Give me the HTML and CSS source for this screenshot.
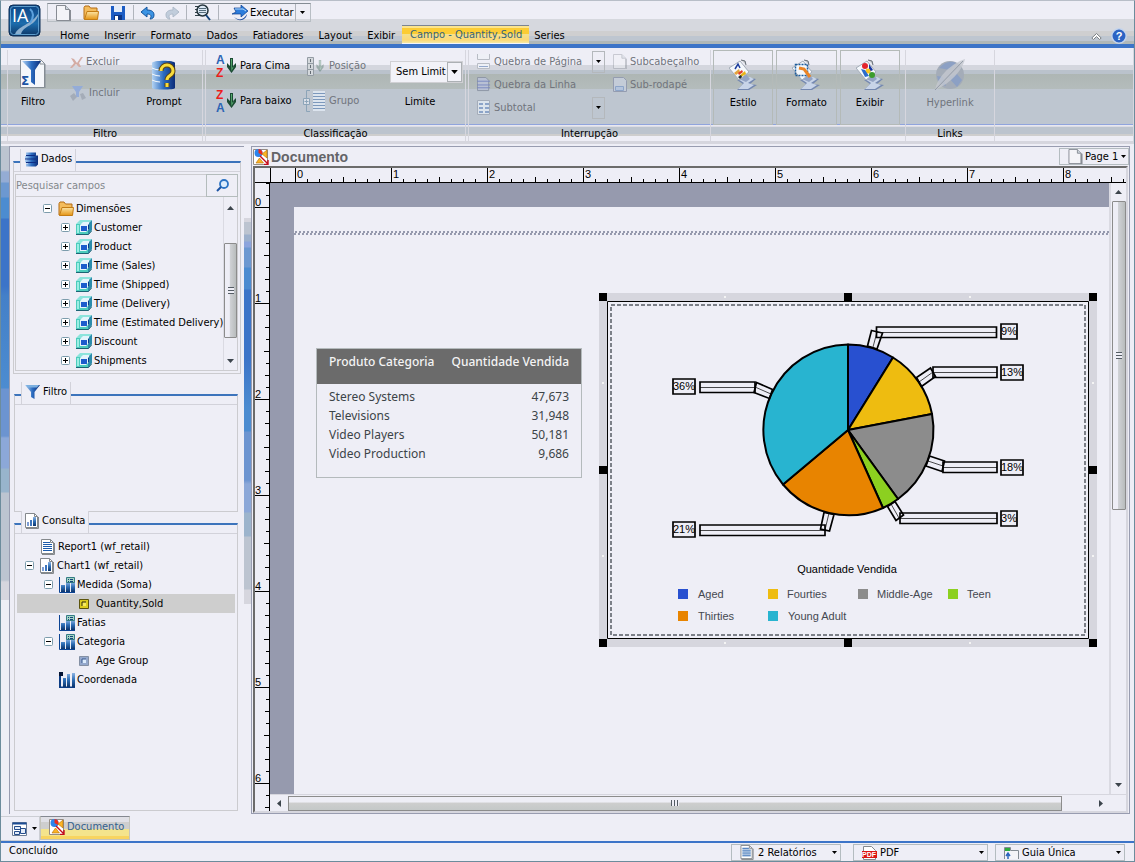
FILE: index.html
```html
<!DOCTYPE html>
<html lang="pt">
<head>
    <meta charset="UTF-8">
    <meta name="viewport" content="width=device-width, initial-scale=1.0">
    <title>InfoAssist - Documento</title>
    <link rel="stylesheet" href="styles.css">
</head>
<body>
    <!-- shared icons -->
    <svg class="defs" width="0" height="0" aria-hidden="true">
        <defs>
            <linearGradient id="g-blue" x1="0" x2="1"><stop offset="0" stop-color="#b4d4f4"/><stop offset=".5" stop-color="#2c6cc0"/><stop offset="1" stop-color="#0c2c78"/></linearGradient>
            <linearGradient id="g-bar" x1="0" x2="0" y1="0" y2="1"><stop offset="0" stop-color="#8cb4e4"/><stop offset=".5" stop-color="#2c6cb4"/><stop offset="1" stop-color="#0c346c"/></linearGradient>
            <linearGradient id="g-logo" x1="0" x2="0" y1="0" y2="1"><stop offset="0" stop-color="#0c4484"/><stop offset=".6" stop-color="#1c6cac"/><stop offset="1" stop-color="#0c3464"/></linearGradient>
            <linearGradient id="g-folder" x1="0" x2="0" y1="0" y2="1"><stop offset="0" stop-color="#fce4a4"/><stop offset="1" stop-color="#e49414"/></linearGradient>
        </defs>
        <symbol id="i-plus" viewBox="0 0 9 9"><rect x=".5" y=".5" width="8" height="8" rx="1" fill="#fff" stroke="#7c9cac"/><path d="M2 4.500h5M4.500 2v5" stroke="#000"/></symbol>
        <symbol id="i-minus" viewBox="0 0 9 9"><rect x=".5" y=".5" width="8" height="8" rx="1" fill="#fff" stroke="#7c9cac"/><path d="M2 4.500h5" stroke="#000"/></symbol>
        <symbol id="i-caret" viewBox="0 0 5 3"><path d="M0 0h5L2.500 3z" fill="currentColor"/></symbol>
        <symbol id="i-folder" viewBox="0 0 16 16"><path d="M1 14V2.500L2 1h4l1.500 2H14v11z" fill="#f4bc5c" stroke="#b46c14"/><path d="M1.500 14.500 4 6.500h11.500l-1 8z" fill="url(#g-folder)" stroke="#c47c14"/></symbol>
        <symbol id="i-cube" viewBox="0 0 16 16"><path d="M0 4 4 0h12l-4 4z" fill="#8ce4dc"/><path d="M12 4 16 0v10l-4 5z" fill="#2c8cac"/><path d="M0 4h12v11H0z" fill="#4cccbc"/><path d="M1 5h2v8H1z" fill="#9ceee4"/><path d="M4 5 7 2h6v7l-3 3H4z" fill="#e4f4fc"/><path d="M5 6h6v5H5z" fill="#1c5ccc"/><path d="M12 5l1-1v5l-1 1z" fill="#0c3c8c"/><path d="M0 14.500h12.500L16 10.500" fill="none" stroke="#1c6474"/></symbol>
        <symbol id="i-db" viewBox="0 0 15 16"><path d="M2 1.500h10v3h2v9l-2 2H2v-3h2v-1H1v-3h2V8H1V5h2V4H2z" fill="url(#g-blue)"/><path d="M2 4.500h9M1 8h11M2 11.500h10" stroke="#0c2c84"/></symbol>
        <symbol id="i-funnel" viewBox="0 0 16 16"><path d="M0 1h15L9.500 8v7L6 13V8z" fill="url(#g-blue)"/><path d="M1 1h13l-2 2.500H3z" fill="#7cb0e0"/></symbol>
        <symbol id="i-chart" viewBox="0 0 15 16"><path d="M.5.500h9l3 3v11H.5z" fill="#fff" stroke="#84888c"/><path d="M9.500.500v3h3M13.500 4v11.500H1" fill="none" stroke="#84888c"/><path d="M2 9h2v4H2z" fill="#7c9cd4"/><path d="M5 7h2v6H5z" fill="#3c74bc"/><path d="M8 4h3v9H8z" fill="url(#g-bar)"/></symbol>
        <symbol id="i-report" viewBox="0 0 15 16"><path d="M.5.500h9l3 3v11H.5z" fill="#fff" stroke="#84888c"/><path d="M9.500.500v3h3M13.500 4v11.500H1" fill="none" stroke="#84888c"/><path d="M2 3.500h7M2 5.500h9M2 7.500h9M2 9.500h9M2 11.500h9" stroke="#1c5cac"/></symbol>
        <symbol id="i-page" viewBox="0 0 15 16"><path d="M.5.500h9l4 4v11H.5z" fill="#f4f4f8" stroke="#888c94"/><path d="M9.500.500v4h4" fill="#ccd4dc" stroke="#888c94"/><path d="M14 5v11" stroke="#888c94" stroke-width="2"/></symbol>
        <symbol id="i-bars" viewBox="0 0 16 16"><path d="M.5 0v15.500H16" fill="none" stroke="#0c4494"/><path d="M2 8h4v7H2zM7 5h4v10H7zM12 5h4v10h-4z" fill="url(#g-bar)"/><path d="M7.500.500h8v5h-8z" fill="#a4d4c4" stroke="#347c84"/><path d="M9 2.500h1m1 0h3M9 4.500h1m1 0h3" stroke="#14447c"/></symbol>
        <symbol id="i-coord" viewBox="0 0 16 16"><path d="M1 1v14.500h15" fill="none" stroke="#0c3c84" stroke-width="2"/><path d="M4 6h3v9H4zM8 2h3v13H8zM13 1h3v14h-3z" fill="url(#g-bar)"/><path d="M0 0h4v4H0z" fill="#041434"/></symbol>
        <symbol id="i-doc" viewBox="0 0 16 16"><path d="M.5.500h14v15H.5z" fill="#fff" stroke="#948c84"/><circle cx="5.500" cy="4" r="4" fill="#2c84ec"/><path d="M5.500 4V0A4 4 0 0 1 9 6z" fill="#ec2c1c"/><path d="M14 1v8L9 5z" fill="#fcb424" stroke="#b46c04" stroke-width=".6"/><path d="m3 14 3.500-5 4 5z" fill="#fcb424" stroke="#b46c04" stroke-width=".6"/><path d="m7 7 8 8M15 11v4.500h-4" fill="none" stroke="#c40c1c" stroke-width="1.400"/></symbol>
        <symbol id="i-down" viewBox="0 0 9 15"><path d="M3 0h3v8l3-3v4l-4.500 6L0 9V5l3 3z" fill="#1c4c34"/><path d="M4 1h1v9l2-2-2.500 5z" fill="#5cb474"/></symbol>
        <symbol id="i-tool" viewBox="0 0 28 32"><path d="m8 21 14-2 5 1-6 5 7 1-8 5H8l6-6z" fill="#7488b0"/><path d="m9 20 12-2 4 2-6 4 6 2-6 4H9l6-6z" fill="#c8d4e8"/><path d="m16 14 5 6-4 3-7-3z" fill="#94a4c4"/><path d="M0 9 11 2l9 11-10 8z" fill="#f4f8fc" stroke="#a4acb8"/><path d="m12 1 4 1 1 4" fill="#ccd0d4" stroke="#646c74"/></symbol>
    </svg>

    <header class="header">
        <svg class="logo" viewBox="0 0 34 34" role="img" aria-label="InfoAssist">
            <rect x="1" y="1" width="31" height="31" rx="4" fill="url(#g-logo)" stroke="#0c2c54"/>
            <path d="M7 31c1-9 18-10 24-23-2 15-17 13-18 23z" fill="#8cb0d0"/>
            <rect x="2.500" y="2.500" width="28" height="28" rx="3" fill="none" stroke="#5c9ccc"/>
            <text x="4" y="18" class="logo-text">IA</text>
            <path d="M22 5q6 5 0 14" fill="none" stroke="#5ca0dc" stroke-width="2"/>
        </svg>
        <div class="header-rows">
            <div class="quick-bar">
                <button class="quick" title="Novo"><svg width="15" height="16"><use href="#i-page"/></svg></button>
                <button class="quick" title="Abrir"><svg width="16" height="16"><use href="#i-folder"/></svg></button>
                <button class="quick" title="Salvar"><svg width="16" height="16" viewBox="0 0 16 16"><path d="M1 1h14v14H1z" fill="#1c5cc4"/><path d="M4 1h8v6H4z" fill="#e4ecf8"/><path d="M4 10h8v5H4z" fill="#0c3484"/><path d="M5 11h3v4H5z" fill="#fff"/></svg></button>
                <span class="bar-sep"></span>
                <button class="quick narrow" title="Desfazer"><svg width="14" height="14" viewBox="0 0 14 14"><path d="M0 6 6 1v3c5 0 7 2 7 5s-2 4-4 4c2-3 1-5-3-5v3z" fill="#3c94e4" stroke="#14549c"/></svg></button>
                <button class="quick narrow faded" title="Refazer"><svg width="14" height="14" viewBox="0 0 14 14"><path d="M14 6 8 1v3C3 4 1 6 1 9s2 4 4 4C3 10 4 8 8 8v3z" fill="#a4b8cc" stroke="#8498ac"/></svg></button>
                <span class="bar-sep"></span>
                <button class="quick" title="Visualizar"><svg width="17" height="17" viewBox="0 0 17 17"><path d="M1 2.500h9M1 5.500h4M1 8.500h4M1 11.500h11" stroke="#34444c"/><circle cx="8.500" cy="6.500" r="5.500" fill="#dce8f4" stroke="#24343c" stroke-width="1.500"/><path d="M5 4.500h7M5 6.500h7M5 8.500h7" stroke="#546c7c"/><path d="m12 11 4 5" stroke="#14447c" stroke-width="2"/></svg></button>
                <span class="bar-sep"></span>
                <button class="run"><svg width="16" height="16" viewBox="0 0 16 16"><path d="M2 3h7V0l7 6-7 6V9H0l4-2z" fill="#2c7cdc" stroke="#0c3c8c" stroke-width=".7"/><path d="M2 12c5 4 10 3 13-3-1 7-9 8-13 3z" fill="#14449c"/><path d="M3 4h8l3 2" fill="none" stroke="#b4dcfc"/></svg>Executar</button>
                <button class="run-more" aria-label="Mais"><svg width="5" height="3"><use href="#i-caret"/></svg></button>
            </div>
            <nav class="tabs">
                <button>Home</button>
                <button>Inserir</button>
                <button>Formato</button>
                <button>Dados</button>
                <button>Fatiadores</button>
                <button>Layout</button>
                <button>Exibir</button>
                <button class="active">Campo - Quantity,Sold</button>
                <button class="after">Series</button>
                <span class="tabs-end">
                    <svg width="11" height="8" viewBox="0 0 11 8"><path d="M.8 6 5.500 1.500 10.200 6 8.500 7.500l-3-3-3 3z" fill="#fff" stroke="#7c8084"/></svg>
                    <svg width="16" height="16" viewBox="0 0 16 16"><circle cx="8" cy="8" r="7.200" fill="#2c64c4" stroke="#c4d4ec" stroke-width="1.500"/><text x="8" y="12" text-anchor="middle" class="help-text">?</text></svg>
                </span>
            </nav>
        </div>
    </header>

    <section class="ribbon">
        <div class="group g-filter">
            <div class="group-body">
                <button class="big w50"><svg width="28" height="32" viewBox="0 0 28 32"><path d="M1.500 1.500h20l4 4v24h-24z" fill="#f4f6fa" stroke="#848c94"/><path d="M21 1.500V6h5v24" fill="none" stroke="#848c94"/><path d="M3 3h19l-6 9v15l-4-3V12z" fill="url(#g-blue)"/><text x="2" y="27" class="sigma">Σ</text></svg>Filtro</button>
                <div class="stack tall">
                    <button class="small off"><svg width="13" height="14" viewBox="0 0 13 14"><path d="m1 3 3 1 3 4 4-6h2L9 8l2 4H9l-3-3-4 4H0l4-5z" fill="#d4aca4"/></svg>Excluir</button>
                    <button class="small off"><svg width="16" height="16" viewBox="0 0 16 16"><path d="M2 1h11L9 7v5H6V7z" fill="#94acd8"/><path d="m0 11 4-3 3 4-4 4zM10 9l3-1 3 5-4 2z" fill="#a4acb8"/></svg>Incluir</button>
                </div>
                <button class="big w64"><svg width="26" height="30" viewBox="0 0 26 30"><path d="M1 3C1 0 24 0 24 3v25c0 2-23 2-23 0z" fill="url(#g-blue)"/><path d="M1 8q4 2 8 2M1 14q4 2 8 2M1 20q4 2 8 2" fill="none" stroke="#f4f8fc"/><path d="M10 11c0-8 12-8 12 0 0 5-6 4-6 9m0 3v4" fill="none" stroke="#5c4414" stroke-width="5"/><path d="M10 11c0-8 12-8 12 0 0 5-6 4-6 9m0 3v4" fill="none" stroke="#f8dc3c" stroke-width="3"/></svg>Prompt</button>
            </div>
            <div class="caption">Filtro</div>
        </div>

        <div class="group g-sort">
            <div class="group-body">
                <div class="stack tall2">
                    <button class="small"><svg width="22" height="28" viewBox="0 0 22 28"><text x="1" y="12" class="az az-a">A</text><text x="1" y="25" class="az az-z">Z</text><use href="#i-down" x="12" y="6" width="9" height="15"/></svg>Para Cima</button>
                    <button class="small"><svg width="22" height="28" viewBox="0 0 22 28"><text x="1" y="12" class="az az-z">Z</text><text x="1" y="25" class="az az-a">A</text><use href="#i-down" x="12" y="6" width="9" height="15"/></svg>Para baixo</button>
                </div>
                <div class="stack tall2 rank">
                    <button class="small off"><svg width="23" height="22" viewBox="0 0 23 22"><path d="M4.500 2.500h6v18h-6zM4.500 8.500h6M4.500 14.500h6" fill="#d4d8dc" stroke="#949ca4"/><path d="M7.500 4v3M7.500 10v3M7.500 16v3" stroke="#646c74"/><use href="#i-down" x="13" y="5" width="8" height="12" opacity=".3"/></svg>Posição</button>
                    <button class="small off"><svg width="23" height="22" viewBox="0 0 23 22"><path d="M7 .5H3.500v21H7" fill="none" stroke="#8ca4b8"/><path d="M.5 8.500h6v6h-6zM3.500 9.500v4M1.500 11.500h4" fill="#dce0e8" stroke="#8ca4b8"/><path d="M10 1h12v20H10z" fill="#dce4ee"/><path d="M10 3.500h12M10 6.500h12M10 9.500h12M10 12.500h12M10 15.500h12M10 18.500h12" stroke="#7c98bc"/></svg>Grupo</button>
                </div>
                <div class="limit">
                    <div class="limit-box">
                        <select id="limit"><option>Sem Limit</option></select>
                        <svg class="pick" width="9" height="5"><use href="#i-caret"/></svg>
                    </div>
                    <label for="limit">Limite</label>
                </div>
            </div>
            <div class="caption">Classificação</div>
        </div>

        <div class="group g-break">
            <div class="group-body">
                <div class="stack rows3 breaks">
                    <div class="row"><button class="small off"><svg width="14" height="16" viewBox="0 0 14 16"><path d="M.5 0v5.500h12V0M.5 9.500h12v5H.5z" fill="#eef0f6" stroke="#b8bcc4"/><path d="M2 12.500h9" stroke="#94a8cc"/></svg>Quebra de Página</button><button class="more" aria-label="Opções de página"><svg width="5" height="3"><use href="#i-caret"/></svg></button></div>
                    <div class="row"><button class="small off"><svg width="14" height="15" viewBox="0 0 15 16"><path d="M.5.500h9l3 3v11H.5z" fill="#b8c0d4" stroke="#8c94a4"/><path d="M0 4.500h14M0 8.500h14M0 11.500h14" stroke="#7888c0"/></svg>Quebra da Linha</button></div>
                    <div class="row"><button class="small off"><svg width="14" height="15" viewBox="0 0 14 15"><path d="M.5.500h12v14H.5z" fill="#dce4ec" stroke="#a4acb8"/><path d="M2 3h4v2H2zm6 0h4v2H8zM2 7h4v2H2zm6 0h4v2H8zm-6 4h4v2H2zm6 0h4v2H8z" fill="#8ca4c8"/></svg>Subtotal</button><button class="more" aria-label="Opções de subtotal"><svg width="5" height="3"><use href="#i-caret"/></svg></button></div>
                </div>
                <div class="stack rows3 heads">
                    <div class="row"><button class="small off"><svg width="14" height="15" opacity=".4"><use href="#i-page"/></svg>Subcabeçalho</button></div>
                    <div class="row"><button class="small off"><svg width="14" height="15" viewBox="0 0 14 15"><path d="M.5.500h10l3 3v11H.5z" fill="#c4ccd8" stroke="#949cb0"/><path d="M2.500 9.500h8v4h-8z" fill="#b4c4dc" stroke="#8ca4c8"/></svg>Sub-rodapé</button></div>
                    <div class="row"></div>
                </div>
            </div>
            <div class="caption">Interrupção</div>
        </div>

        <div class="group g-views">
            <div class="group-body">
                <button class="big framed"><svg width="28" height="32" viewBox="0 0 28 32"><use href="#i-tool"/><path d="m6 10 3-5 2 4" fill="none" stroke="#1c3c9c" stroke-width="1.500"/><path d="m5 14 5-4 1 3-4 3z" fill="#e4a43c"/><path d="m10 17 6-5 1 3-5 3z" fill="#e8b414"/><path d="m9 14 4-3 1 2-4 3z" fill="#e43c2c"/><path d="m9 18 3-2 1 2-2 2z" fill="#1c2c34"/></svg>Estilo</button>
                <button class="big framed"><svg width="28" height="32" viewBox="0 0 28 32"><use href="#i-tool"/><path d="M3.500 5.500h12v11h-12z" fill="none" stroke="#1c5c9c" stroke-width="1.500" stroke-dasharray="2 1"/><path d="m7 9 5 1 6 8" fill="none" stroke="#ec8424" stroke-width="3"/></svg>Formato</button>
                <button class="big framed"><svg width="28" height="32" viewBox="0 0 28 32"><use href="#i-tool"/><circle cx="9" cy="7" r="3" fill="#e4242c"/><path d="m13 5 4 6-4 2z" fill="#1434a4"/><circle cx="12" cy="12" r="2.500" fill="#fcc41c"/><circle cx="16" cy="16" r="3" fill="#3c9c2c"/><path d="m5 10 4 8 4-1-4-6z" fill="#2c6ccc"/></svg>Exibir</button>
            </div>
            <div class="caption"></div>
        </div>

        <div class="group g-links">
            <div class="group-body">
                <button class="big wide off"><svg width="32" height="32" viewBox="0 0 32 32"><circle cx="16" cy="16" r="14" fill="#a4acb8"/><path d="M5 9q9-9 17-5l-6 7zM14 18l9-3 5 6-5 7zM3 17l6 1 3 9q-8-2-9-10z" fill="#8ca0c4"/><path d="M1 31C3 20 14 6 31 0 30 6 22 20 7 28z" fill="#c4c8d0" opacity=".8"/><path d="M1 31 29 2" stroke="#949ca8"/></svg>Hyperlink</button>
            </div>
            <div class="caption">Links</div>
        </div>
    </section>

    <main class="workspace">
        <div class="gutter gutter-left"></div>
        <aside class="sidebar">
            <section class="panel panel-data">
                <div class="panel-head"><h2><svg width="15" height="16"><use href="#i-db"/></svg>Dados</h2></div>
                <div class="search">
                    <input type="text" placeholder="Pesquisar campos" aria-label="Pesquisar campos">
                    <button aria-label="Pesquisar"><svg width="13" height="13" viewBox="0 0 13 13"><circle cx="8" cy="5" r="4" fill="#dcecfc" stroke="#2c74c4" stroke-width="1.800"/><path d="M5 8 1 12" stroke="#1c54a4" stroke-width="2"/></svg></button>
                </div>
                <div class="tree-box">
                    <ul class="tree">
                        <li class="lv1"><button class="toggle" aria-label="Recolher"><svg width="9" height="9"><use href="#i-minus"/></svg></button><svg width="16" height="16"><use href="#i-folder"/></svg>Dimensões</li>
                        <li class="lv2"><button class="toggle" aria-label="Expandir"><svg width="9" height="9"><use href="#i-plus"/></svg></button><svg width="16" height="16"><use href="#i-cube"/></svg>Customer</li>
                        <li class="lv2"><button class="toggle" aria-label="Expandir"><svg width="9" height="9"><use href="#i-plus"/></svg></button><svg width="16" height="16"><use href="#i-cube"/></svg>Product</li>
                        <li class="lv2"><button class="toggle" aria-label="Expandir"><svg width="9" height="9"><use href="#i-plus"/></svg></button><svg width="16" height="16"><use href="#i-cube"/></svg>Time (Sales)</li>
                        <li class="lv2"><button class="toggle" aria-label="Expandir"><svg width="9" height="9"><use href="#i-plus"/></svg></button><svg width="16" height="16"><use href="#i-cube"/></svg>Time (Shipped)</li>
                        <li class="lv2"><button class="toggle" aria-label="Expandir"><svg width="9" height="9"><use href="#i-plus"/></svg></button><svg width="16" height="16"><use href="#i-cube"/></svg>Time (Delivery)</li>
                        <li class="lv2"><button class="toggle" aria-label="Expandir"><svg width="9" height="9"><use href="#i-plus"/></svg></button><svg width="16" height="16"><use href="#i-cube"/></svg>Time (Estimated Delivery)</li>
                        <li class="lv2"><button class="toggle" aria-label="Expandir"><svg width="9" height="9"><use href="#i-plus"/></svg></button><svg width="16" height="16"><use href="#i-cube"/></svg>Discount</li>
                        <li class="lv2"><button class="toggle" aria-label="Expandir"><svg width="9" height="9"><use href="#i-plus"/></svg></button><svg width="16" height="16"><use href="#i-cube"/></svg>Shipments</li>
                    </ul>
                    <div class="vscroll tree-scroll">
                        <svg width="7" height="4" viewBox="0 0 7 4"><path d="M0 4 3.500 0 7 4z" fill="#3c444c"/></svg>
                        <div class="vthumb"><i></i></div>
                        <svg width="7" height="4" viewBox="0 0 7 4"><path d="M0 0h7L3.500 4z" fill="#3c444c"/></svg>
                    </div>
                </div>
            </section>

            <section class="panel panel-filter">
                <div class="panel-head"><h2><svg width="16" height="16"><use href="#i-funnel"/></svg>Filtro</h2></div>
            </section>

            <section class="panel panel-query">
                <div class="panel-head"><h2><svg width="15" height="16"><use href="#i-chart"/></svg>Consulta</h2></div>
                <ul class="tree query">
                    <li class="q1"><svg width="15" height="16"><use href="#i-report"/></svg>Report1 (wf_retail)</li>
                    <li class="q1t"><button class="toggle" aria-label="Recolher"><svg width="9" height="9"><use href="#i-minus"/></svg></button><svg width="15" height="16"><use href="#i-chart"/></svg>Chart1 (wf_retail)</li>
                    <li class="q2t"><button class="toggle" aria-label="Recolher"><svg width="9" height="9"><use href="#i-minus"/></svg></button><svg width="16" height="16"><use href="#i-bars"/></svg>Medida (Soma)</li>
                    <li class="q3 selected"><svg width="10" height="10" viewBox="0 0 10 10"><path d="M.5.500h9v9h-9z" fill="#dccc1c" stroke="#5c540c"/><path d="M3 3h4v4H3z" fill="#f8ec5c"/><path d="M3 7V3h4" fill="none" stroke="#2c2804"/></svg>Quantity,Sold</li>
                    <li class="q2"><svg width="16" height="16"><use href="#i-bars"/></svg>Fatias</li>
                    <li class="q2t"><button class="toggle" aria-label="Recolher"><svg width="9" height="9"><use href="#i-minus"/></svg></button><svg width="16" height="16"><use href="#i-bars"/></svg>Categoria</li>
                    <li class="q3"><svg width="10" height="10" viewBox="0 0 10 10"><path d="M.5.500h9v9h-9z" fill="#94a8cc" stroke="#8490a4"/><path d="M3 3h4v4H3z" fill="#dcecfc"/><path d="M3 7V3h4" fill="none" stroke="#34548c"/></svg>Age Group</li>
                    <li class="q2"><svg width="16" height="16"><use href="#i-coord"/></svg>Coordenada</li>
                </ul>
            </section>
        </aside>
        <div class="gutter gutter-mid"></div>

        <section class="document">
            <div class="doc-title">
                <svg width="16" height="16"><use href="#i-doc"/></svg>
                <h1>Documento</h1>
                <div class="dropdown page-pick">
                    <svg class="dd-icon" width="15" height="15"><use href="#i-page"/></svg>
                    <select aria-label="Página"><option>Page 1</option></select>
                    <svg class="dd-caret" width="5" height="3"><use href="#i-caret"/></svg>
                </div>
            </div>
            <div class="doc-frame">
                <div class="corner"></div>
                <svg class="ruler-h" width="100%" height="15">
                    <defs><pattern id="ticks-h" x="25" width="96" height="15" patternUnits="userSpaceOnUse"><path d="M.5 0v15M12.500 11v4M24.500 11v4M36.500 11v4M48.500 9v6M60.500 11v4M72.500 11v4M84.500 11v4" stroke="#000"/></pattern></defs>
                    <rect x="25" width="100%" height="15" fill="url(#ticks-h)"/>
                    <path d="M.5 0v15M12.500 11v4M0 14.500h2000" stroke="#000"/>
                    <text x="27" y="10">0</text><text x="123" y="10">1</text><text x="219" y="10">2</text><text x="315" y="10">3</text><text x="411" y="10">4</text><text x="507" y="10">5</text><text x="603" y="10">6</text><text x="699" y="10">7</text><text x="795" y="10">8</text>
                </svg>
                <svg class="ruler-v" width="15" height="100%">
                    <defs><pattern id="ticks-v" y="24" width="15" height="96" patternUnits="userSpaceOnUse"><path d="M0 .5h15M11 12.500h4M10 24.500h5M11 36.500h4M9 48.500h6M11 60.500h4M10 72.500h5M11 84.500h4" stroke="#000"/></pattern></defs>
                    <rect y="24" width="15" height="100%" fill="url(#ticks-v)"/>
                    <path d="M11 .5h4M11 12.500h4M14.500 0v2000" stroke="#000"/>
                    <text x="0" y="23">0</text><text x="0" y="119">1</text><text x="0" y="215">2</text><text x="0" y="311">3</text><text x="0" y="407">4</text><text x="0" y="503">5</text><text x="0" y="599">6</text>
                </svg>

                <div class="canvas">
                    <div class="page">
                        <div class="margin-line"></div>
                        <div class="report">
                            <table>
                                <thead><tr><th>Produto Categoria</th><th>Quantidade Vendida</th></tr></thead>
                                <tbody>
                                    <tr><td>Stereo Systems</td><td>47,673</td></tr>
                                    <tr><td>Televisions</td><td>31,948</td></tr>
                                    <tr><td>Video Players</td><td>50,181</td></tr>
                                    <tr><td>Video Production</td><td>9,686</td></tr>
                                </tbody>
                            </table>
                        </div>
                        <svg class="chart" width="498" height="354" viewBox="0 0 498 354" role="img" aria-label="Quantidade Vendida">
                            <path d="M0 0h498v354H0z" fill="#d6d6de"/>
                            <path d="M8.500 8.500h481v337h-481z" fill="#eeeef6" stroke="#000"/>
                            <path d="M12 12h474v330H12z" fill="none" stroke="#7c8088" stroke-width="2" stroke-dasharray="4 2"/>
                            <!-- selection handles -->
                            <path d="M0 0h8v8H0zM245 0h8v8h-8zM490 0h8v8h-8zM0 173h8v8H0zM490 173h8v8h-8zM0 346h8v8H0zM245 346h8v8h-8zM490 346h8v8h-8z"/>
                            <path d="M125 3h2v2h-2zM370 3h2v2h-2zM3 89h2v2H3zM493 89h2v2h-2zM3 262h2v2H3zM493 262h2v2h-2zM125 349h2v2h-2zM370 349h2v2h-2z" fill="#f4f4f4"/>
                            <!-- slices -->
                            <g stroke="#000" stroke-width="2" stroke-linejoin="round">
                                <path d="M249 137V51.500A85.500 85.500 0 0 1 294 64.500z" fill="#2850d0"/>
                                <path d="M249 137 294 64.500A85.500 85.500 0 0 1 333 121z" fill="#eebc10"/>
                                <path d="M249 137 333 121A85.500 85.500 0 0 1 299 206z" fill="#8c8c8c"/>
                                <path d="M249 137 299 206A85.500 85.500 0 0 1 284 215z" fill="#8cd020"/>
                                <path d="M249 137 284 215A85.500 85.500 0 0 1 184 191.500z" fill="#e88400"/>
                                <path d="M249 137 184 191.500A85.500 85.500 0 0 1 249 51.500z" fill="#28b4d0"/>
                            </g>
                            <!-- callouts -->
                            <g fill="none" stroke="#000" stroke-width="1.700">
                                <path d="M277.500 34h120v10.500h-120zM334 74h64v10.500h-64zM344 169h54v10.500h-54zM301 220h97v10.500h-97zM101 89h55v10.500h-55zM101 232h125v10.500H101z"/>
                                <path d="m272.500 37.500 11 2.500-5.500 16-9.500-3zM331.500 75l5 8.500-14 10-5-9zM330.500 163l15 5-2.500 10.500-16-5.500zM296 208.500l8.500 13.500-7.500 5.500-8.500-14zM157.500 89.500l16 7-3 9-15.500-6zM225 219.500l10 2-4.500 16.500-9-2z"/>
                                <path d="M277.500 39.500h120M334 79.500h64M344 174.500h54M301 225.500h97M101 94.500h55M101 237.500h125M278 39l-4 15M334 79l-14 10M344 173l-15-5M300 225l-8-14M156 94l16 7M226 237l4-17" stroke-width=".7"/>
                            </g>
                            <path d="M402 31h16v15h-16zM402 72h22v15h-22zM402 167h22v15h-22zM402 218h16v15h-16zM74 86h22v15H74zM74 229h22v15H74z" fill="#eeeef6" stroke="#000" stroke-width="1.700"/>
                            <g class="pct">
                                <text x="410" y="42">9%</text><text x="413" y="83">13%</text><text x="413" y="178">18%</text><text x="410" y="229">3%</text><text x="85" y="97">36%</text><text x="85" y="240">21%</text>
                            </g>
                            <text x="248" y="280" class="legend-title">Quantidade Vendida</text>
                            <g class="legend">
                                <path d="M79 296h10v10H79z" fill="#2850d0"/><text x="99" y="305">Aged</text>
                                <path d="M169 296h10v10h-10z" fill="#eebc10"/><text x="188" y="305">Fourties</text>
                                <path d="M259 296h10v10h-10z" fill="#8c8c8c"/><text x="278" y="305">Middle-Age</text>
                                <path d="M349 296h10v10h-10z" fill="#8cd020"/><text x="368" y="305">Teen</text>
                                <path d="M79 318h10v10H79z" fill="#e88400"/><text x="99" y="327">Thirties</text>
                                <path d="M169 318h10v10h-10z" fill="#28b4d0"/><text x="189" y="327">Young Adult</text>
                            </g>
                        </svg>
                    </div>
                </div>
                <div class="vscroll doc-vscroll">
                    <svg width="7" height="4" viewBox="0 0 7 4"><path d="M0 4 3.500 0 7 4z" fill="#3c444c"/></svg>
                    <div class="vthumb"><i></i></div>
                    <svg width="7" height="4" viewBox="0 0 7 4"><path d="M0 0h7L3.500 4z" fill="#3c444c"/></svg>
                </div>
                <div class="hscroll">
                    <svg width="4" height="7" viewBox="0 0 4 7"><path d="M4 0v7L0 3.500z" fill="#3c444c"/></svg>
                    <div class="hthumb"><i></i></div>
                    <svg width="4" height="7" viewBox="0 0 4 7"><path d="M0 0v7l4-3.500z" fill="#3c444c"/></svg>
                </div>
            </div>
        </section>
    </main>

    <div class="doc-tabs">
        <button class="windows" aria-label="Janelas"><svg width="16" height="16" viewBox="0 0 16 16"><path d="M.5 1.500h14v13H.5z" fill="#fff" stroke="#6c7c94"/><path d="M.5 2.500h14" stroke="#1c4c94" stroke-width="2"/><path d="M2.500 5.500h6v3h-6zM2.500 10.500h5v3h-5zM8.500 7.500h5v5h-5z" fill="#e4ecf8" stroke="#244c8c"/></svg><svg width="5" height="3"><use href="#i-caret"/></svg></button>
        <button class="doc-tab"><svg width="16" height="16"><use href="#i-doc"/></svg>Documento</button>
    </div>

    <footer class="status">
        <span class="status-text">Concluído</span>
        <div class="dropdown st-reports">
            <svg class="dd-icon" width="15" height="15"><use href="#i-report"/></svg>
            <select aria-label="Relatórios"><option>2 Relatórios</option></select>
            <svg class="dd-caret" width="5" height="3"><use href="#i-caret"/></svg>
        </div>
        <div class="dropdown st-format">
            <svg class="dd-icon" width="15" height="14" viewBox="0 0 15 14"><path d="M1.500.500h8l4 4v9h-12z" fill="#fff" stroke="#84888c"/><path d="M0 5h15v7H0z" fill="#dc1414"/><text x="7" y="11" text-anchor="middle" class="pdf-text">PDF</text></svg>
            <select aria-label="Formato de saída"><option>PDF</option></select>
            <svg class="dd-caret" width="5" height="3"><use href="#i-caret"/></svg>
        </div>
        <div class="dropdown st-tab">
            <svg class="dd-icon" width="15" height="14" viewBox="0 0 15 14"><path d="M.5 13V1.500h6v3h8V13" fill="#f4f4f8" stroke="#848c94"/><path d="M1 2h5v3H1z" fill="#2cac3c"/><path d="M4 13V8M2 10l2-3 2 3" fill="none" stroke="#2c64bc" stroke-width="1.500"/></svg>
            <select aria-label="Modo de guia"><option>Guia Única</option></select>
            <svg class="dd-caret" width="5" height="3"><use href="#i-caret"/></svg>
        </div>
    </footer>
</body>
</html>
```
FILE: styles.css
```css
* {
    box-sizing: border-box;
}
body {
    margin: 0;
    height: 100vh;
    display: flex;
    flex-direction: column;
    overflow: hidden;
    font-family: "DejaVu Sans Condensed", Tahoma, "Noto Sans", sans-serif;
    font-size: 11px;
    line-height: 14px;
    color: #000;
    background-color: #eeeef6;
    border: 1px solid #6c8c9c;
    border-top-color: #b8bec8;
}
button, select, input {
    font: inherit;
    color: inherit;
    background: none;
    border: 0;
    border-radius: 0;
    padding: 0;
    margin: 0;
}
button {
    cursor: pointer;
    white-space: nowrap;
}
svg {
    display: block;
    flex: none;
}
h1, h2, ul {
    margin: 0;
    padding: 0;
    list-style: none;
}
.defs {
    position: absolute;
}

/* header */
.header {
    display: flex;
    height: 47px;
    flex: none;
    padding-left: 7px;
    border-bottom: 4px solid #3c74c8;
    background: linear-gradient(#eeeef6 18px, #d6d8de 18px, #d6d8de 30px, #cfcfd0 30px, #cfcfd0 35px, #bec6d0 35px, #bec6d0 40px, #b0b8b8 40px);
}
.logo {
    width: 34px;
    height: 34px;
    margin-top: 3px;
}
.logo-text {
    font: 18px "Open Sans", sans-serif;
    fill: #fff;
}
.help-text {
    font: bold 11px "Liberation Sans", sans-serif;
    fill: #fff;
}
.header-rows {
    flex: 1;
    display: flex;
    flex-direction: column;
    justify-content: space-between;
    padding-top: 2px;
}
.quick-bar {
    display: flex;
    align-items: center;
    align-self: flex-start;
    height: 19px;
    margin-left: 5px;
    padding-left: 2px;
    border: 1px solid #b8bec4;
    border-top-color: #848c94;
}
.quick {
    width: 27px;
    display: flex;
    justify-content: center;
}
.quick.narrow {
    width: 24px;
}
.quick.faded {
    opacity: .6;
}
.bar-sep {
    width: 1px;
    height: 15px;
    margin: 0 2px;
    background-color: #b0b4bc;
}
.run {
    display: flex;
    align-items: center;
    gap: 2px;
    padding: 0 1px 0 11px;
}
.run-more {
    display: flex;
    align-items: center;
    justify-content: center;
    width: 15px;
    height: 17px;
    border-left: 1px solid #b0b4bc;
}
.tabs {
    display: flex;
    align-items: flex-end;
    padding-left: 10px;
}
.tabs button {
    height: 16px;
    padding: 0 7px 0 8px;
}
.tabs .active {
    height: 19px;
    color: #34647c;
    border-top: 1px solid #7c8490;
    border-bottom: 1px solid #f4f4f8;
    background: linear-gradient(#fce48c 2px, #fccc34 2px, #fccc34 8px, #f4e08c 8px, #fcd874 14px, #f4e8a4);
}
.tabs .after {
    padding-left: 5px;
}
.tabs-end {
    display: flex;
    align-items: center;
    gap: 9px;
    margin-left: auto;
    padding-right: 7px;
}

/* ribbon */
.ribbon {
    display: flex;
    flex: none;
    height: 96px;
    padding: 2px 0 3px 6px;
    border-right: 1px solid #d6d6de;
    background: linear-gradient(#eeeef6 17px, #d4d6de 17px, #d4d6de 22px, #bac2cc 22px, #bac2cc 26px, #aeb6b4 26px, #b4bcbc 41px, #bec6d0 41px, #bec6d0 76px, #90a4dc 76px, #90a4dc 77px, #eeeef6 77px, #d6d6de 79px, #bcc4ce 79px, #bcc4ce 86px, #cecece 86px, #cecece 88px, #eeeef6 88px, #eeeef6 93px, #d6d6de 93px);
}
.group {
    display: flex;
    flex-direction: column;
    flex: none;
    border-left: 1px solid #d6d6de;
    border-right: 1px solid #d6d6de;
    margin-right: 2px;
}
.group-body {
    display: flex;
    height: 75px;
}
.caption {
    height: 16px;
    line-height: 17px;
    text-align: center;
}
.g-filter { width: 196px; }
.g-sort { width: 261px; }
.g-break { width: 243px; }
.g-views { width: 190px; border: 0; }
.g-links { width: 90px; }
.big {
    display: flex;
    flex-direction: column;
    align-items: center;
    justify-content: flex-end;
    gap: 5px;
    padding-bottom: 16px;
}
.w50 { width: 50px; }
.w64 { width: 64px; }
.wide {
    width: 100%;
    padding-bottom: 15px;
}
.framed {
    width: 61px;
    margin-right: 3px;
    padding-bottom: 14px;
    border: 1px solid #b4bab8;
}
.off {
    color: #70747c;
}
.stack {
    display: flex;
    flex-direction: column;
}
.small {
    display: flex;
    align-items: center;
    gap: 3px;
}
.tall {
    width: 74px;
    padding: 4px 0 0 12px;
    gap: 15px;
}
.tall .small {
    height: 16px;
}
.tall2 {
    width: 90px;
    padding: 2px 0 0 9px;
    gap: 7px;
}
.tall2 .small {
    height: 28px;
}
.rank {
    padding-left: 7px;
}
.az {
    font: bold 12px/12px "Liberation Sans", sans-serif;
}
.az-a { fill: #2c64b4; }
.az-z { fill: #ec1c1c; }
.sigma {
    font: bold 12px "DejaVu Sans", sans-serif;
    fill: #1c54a4;
}
.limit {
    display: flex;
    flex-direction: column;
    align-items: flex-start;
    gap: 12px;
    padding: 11px 0 0 4px;
}
.limit label {
    width: 60px;
    text-align: center;
}
.limit-box {
    position: relative;
    width: 73px;
    height: 22px;
    border: 1px solid #d0d0d4;
    background-color: #f2f2f8;
}
.limit-box select {
    width: 100%;
    height: 20px;
    padding: 0 16px 0 5px;
    appearance: none;
}
.pick {
    position: absolute;
    right: 0;
    top: 0;
    width: 15px;
    height: 20px;
    padding: 7px 2px;
    border: 1px solid #acb0b4;
    pointer-events: none;
}
.rows3 .row {
    display: flex;
    align-items: center;
    justify-content: space-between;
    height: 23px;
}
.breaks {
    width: 136px;
    padding-left: 8px;
}
.heads {
    padding-left: 8px;
}
.more {
    display: flex;
    align-items: center;
    justify-content: center;
    width: 13px;
    height: 22px;
    border: 1px solid #b4b8bc;
}

/* workspace */
.workspace {
    display: flex;
    flex: 1;
    min-height: 0;
    padding: 2px 4px 0 0;
}
.gutter {
    flex: none;
    width: 8px;
    background: linear-gradient(#bcc4d0 24px, #94acd4 26px, #94acd4 36px, #6c98d0 37px, #6c98d0 51px, #4c8cd0 52px, #4c8cd0 72px, #3c74c8 73px, #3c74c8 140px, #4480c8 150px, #4c8cd0 242px, #6c94d0 243px, #6c94d0 290px, #8ca8d8 292px, #8ca8d8 322px, #98b4cc 323px, #98b4cc 346px, #bcc4d0 347px, #bcc4d0 434px, #d6d6de 436px, #d6d6de 454px, #eeeef6 454px);
}
.gutter-mid {
    width: 7px;
    margin-top: 72px;
    background: linear-gradient(#d6d6de 4px, #bcc4d0 4px, #bcc4d0 16px, #9cb0cc 17px, #9cb0cc 23px, #8ca4dc 24px, #8ca4dc 29px, #6c98d0 30px, #6c98d0 49px, #4c8cd0 50px, #4c8cd0 71px, #3c74c8 72px, #3c74c8 140px, #4c8cd0 191px, #4c8cd0 213px, #6c94d0 214px, #6c94d0 262px, #8ca8d8 266px, #8ca8d8 294px, #9cb4cc 295px, #9cb4cc 318px, #bcc4d0 319px, #bcc4d0 371px, #d6d6de 372px, #d6d6de 386px, #eeeef6 386px);
}
.sidebar {
    display: flex;
    flex-direction: column;
    flex: none;
    width: 235px;
    border-left: 1px solid #989cb0;
    border-top: 1px solid #989cb0;
    padding: 14px 3px 0 3px;
}
.panel {
    border: 1px solid #cbcbcf;
    border-top: 2px solid #3c74bc;
}
.panel-head {
    height: 9px;
    border-bottom: 1px solid #d2d2da;
}
.panel-head h2 {
    display: inline-flex;
    align-items: center;
    gap: 2px;
    height: 23px;
    margin: -14px 0 0 6px;
    padding: 0 3px 3px;
    font-size: 11px;
    font-weight: normal;
    border: 1px solid #d2d2da;
    border-top: 0;
    background-color: #eeeef6;
    vertical-align: top;
}
.panel-data {
    margin-bottom: 20px;
}
.panel-filter, .panel-query {
    margin: 0 3px 0 1px;
}
.panel-filter {
    height: 118px;
    margin-bottom: 11px;
}
.panel-query {
    flex: 1;
    margin-bottom: 3px;
}
.search {
    display: flex;
    margin: 2px 2px 0 1px;
    height: 23px;
}
.search input {
    flex: 1;
    min-width: 0;
    padding: 0;
    border: 1px solid #ccccd0;
    border-right: 0;
}
.search input::placeholder {
    color: #84888c;
}
.search button {
    display: flex;
    align-items: center;
    justify-content: center;
    width: 32px;
    border: 1px solid #b4bcbc;
}
.tree-box {
    display: flex;
    margin: 0 2px 2px 1px;
    border: 1px solid #ccccd0;
    border-top: 0;
}
.tree {
    flex: 1;
    min-width: 0;
    padding-top: 2px;
}
.tree li {
    display: flex;
    align-items: center;
    height: 19px;
    gap: 2px;
    white-space: nowrap;
}
.toggle {
    margin-right: 4px;
}
.lv1 { padding-left: 27px; }
.lv2 { padding-left: 45px; }
.query {
    padding: 3px 2px 0 2px;
}
.query .q1 { padding-left: 24px; }
.query .q1t { padding-left: 8px; }
.query .q2t { padding-left: 27px; }
.query .q2 { padding-left: 42px; }
.query .q3 { padding-left: 62px; gap: 7px; }
.query .selected {
    background-color: #cecece;
}

/* scrollbars */
.vscroll {
    display: flex;
    flex-direction: column;
    align-items: center;
    flex: none;
    width: 16px;
    border-left: 2px solid #dadae2;
    padding: 7px 0;
}
.vthumb {
    display: flex;
    align-items: center;
    justify-content: center;
    width: 14px;
    border: 1px solid #8c8c8c;
    border-radius: 1px;
    background: linear-gradient(to right, #eeeef6 40%, #d0d2d6 45%, #b8bcbc);
}
.vthumb i {
    width: 6px;
    height: 7px;
    background: repeating-linear-gradient(#545c64 0, #545c64 1px, #eeeef6 1px, #eeeef6 3px);
}
.tree-scroll {
    width: 14px;
    height: 173px;
    padding: 9px 0 7px;
    border-left-width: 1px;
}
.tree-scroll .vthumb {
    width: 13px;
    height: 95px;
    margin-top: 33px;
}
.tree-scroll svg:last-child, .doc-vscroll svg:last-child {
    margin-top: auto;
}
.hscroll {
    grid-area: hs;
    display: flex;
    align-items: center;
    padding: 0 23px 0 7px;
    border-top: 1px solid #d6d6de;
}
.hthumb {
    display: flex;
    align-items: center;
    justify-content: center;
    flex: 1;
    height: 15px;
    margin: 0 37px 0 7px;
    border: 1px solid #8c8c8c;
    background: linear-gradient(#eeeef6 40%, #cecece 45%, #c4c8c8);
}
.hthumb i {
    width: 8px;
    height: 6px;
    background: repeating-linear-gradient(to right, #545c64 0, #545c64 1px, #eeeef6 1px, #eeeef6 3px);
}

/* document */
.document {
    flex: 1;
    min-width: 0;
    display: flex;
    flex-direction: column;
    border: 1px solid #989cb0;
}
.doc-title {
    display: flex;
    align-items: center;
    height: 19px;
    gap: 2px;
    padding-left: 1px;
}
.doc-title h1 {
    flex: 1;
    font: bold 14px/18px "Liberation Sans", sans-serif;
    color: #646468;
}
.dropdown {
    position: relative;
    display: flex;
    align-items: center;
}
.dropdown select {
    width: 100%;
    height: 17px;
    padding-left: 25px;
    appearance: none;
    border: 1px solid #b4bcc0;
}
.dd-icon {
    position: absolute;
    left: 9px;
    pointer-events: none;
}
.dd-caret {
    position: absolute;
    right: 4px;
    pointer-events: none;
}
.page-pick {
    width: 70px;
}
.page-pick .dd-caret {
    right: 3px;
}
.doc-frame {
    flex: 1;
    min-height: 0;
    display: grid;
    grid-template: "corner rh rh" 15px "rv canvas vs" minmax(0, 1fr) "rv hs hs" 17px / 15px minmax(0, 1fr) 17px;
    border: 2px solid #d6d6de;
    border-top-color: #6b6b6b;
    border-left-color: #6b6b6b;
    margin: 0 1px;
}
.corner {
    grid-area: corner;
    border-bottom: 1px solid #000;
}
.ruler-h { grid-area: rh; }
.ruler-v { grid-area: rv; }
.ruler-h text, .ruler-v text {
    font: 11px "Liberation Sans", sans-serif;
}
.doc-vscroll {
    grid-area: vs;
    width: 17px;
    padding: 7px 0;
    border-color: #dadae2;
}
.doc-vscroll .vthumb {
    height: 309px;
    margin-top: 7px;
}
.canvas {
    grid-area: canvas;
    padding: 24px 0 0 24px;
    background-color: #969aae;
    overflow: hidden;
}
.page {
    position: relative;
    height: 100%;
    padding-top: 24px;
    background-color: #eeeef6;
}
.margin-line {
    height: 4px;
    background:
        repeating-linear-gradient(to right, #eeeef6 0, #eeeef6 1px, #969aae 1px, #969aae 3px, #eeeef6 3px, #eeeef6 4px) 0 0 / 100% 2px no-repeat,
        repeating-linear-gradient(to right, #969aae 0, #969aae 2px, #eeeef6 2px, #eeeef6 4px) 0 2px / 100% 2px no-repeat;
}
.report {
    position: absolute;
    left: 22px;
    top: 141px;
    width: 266px;
    padding-bottom: 14px;
    border: 1px solid #b4babc;
    color: #3c4448;
    font: 12px/15px "Noto Sans", sans-serif;
}
.report table {
    width: 100%;
    border-collapse: collapse;
}
.report th {
    height: 35px;
    padding: 5px 12px 0;
    font-weight: 500;
    vertical-align: top;
    text-align: left;
    white-space: nowrap;
    color: #f4f4f4;
    background-color: #6b6b6b;
}
.report td {
    height: 19px;
    padding: 2px 12px;
}
.report tbody tr:first-child td {
    height: 22px;
    padding-top: 5px;
}
.report th:last-child, .report td:last-child {
    text-align: right;
    padding-left: 0;
}
.chart {
    position: absolute;
    left: 305px;
    top: 86px;
}
.chart text {
    font: 11px "Liberation Sans", sans-serif;
}
.chart .pct, .chart .legend-title {
    text-anchor: middle;
}
.legend text {
    fill: #444850;
}

/* bottom */
.doc-tabs {
    display: flex;
    flex: none;
    height: 29px;
    padding-top: 2px;
    border-bottom: 2px solid #3c74c8;
}
.windows {
    display: flex;
    align-items: center;
    gap: 4px;
    width: 39px;
    height: 25px;
    padding-left: 11px;
    border: 1px solid #ccced4;
    border-left: 0;
}
.doc-tab {
    display: flex;
    align-items: center;
    gap: 2px;
    height: 24px;
    padding: 0 5px 3px 8px;
    color: #34608c;
    border: 1px solid #c4c4bc;
    border-top: 1px solid #848890;
    background: linear-gradient(#e0e0e6 5px, #cecece 5px, #cecece 12px, #f4e48c 12px, #f4e48c 19px, #f8d460 19px);
}
.status {
    display: flex;
    align-items: flex-end;
    flex: none;
    height: 18px;
    padding-right: 9px;
}
.status-text {
    flex: 1;
    padding: 0 0 3px 8px;
}
.status .dropdown select {
    padding-left: 26px;
}
.st-reports {
    width: 110px;
    margin-right: 12px;
}
.st-format {
    width: 135px;
    margin-right: 7px;
}
.st-tab { width: 130px; }
.pdf-text {
    font: bold 7px "Liberation Sans", sans-serif;
    fill: #fff;
}
```
